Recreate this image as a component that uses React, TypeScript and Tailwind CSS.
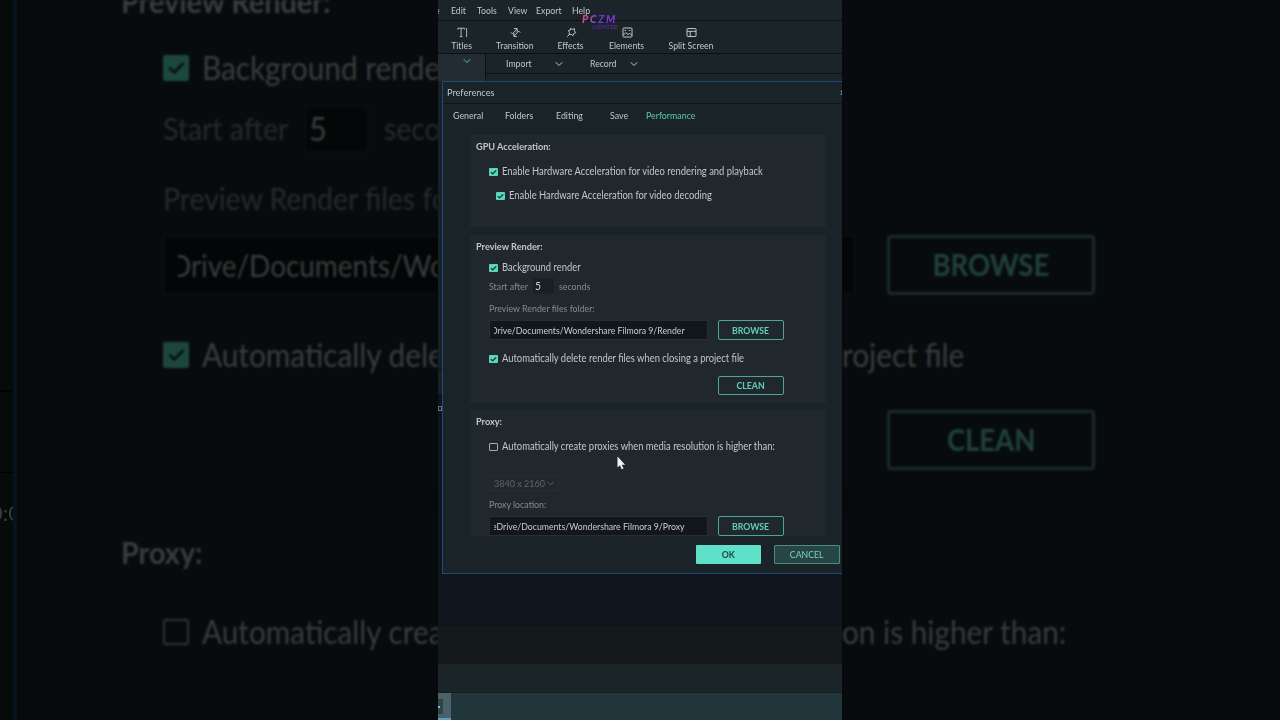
import { Check, ChevronDown } from "lucide-react";
import type { ReactNode } from "react";

const menuItems = [
  { label: "Edit", className: "ml-[13px] w-[26px]" },
  { label: "Tools", className: "w-[31px]" },
  { label: "View", className: "w-[28px]" },
  { label: "Export", className: "w-[36px]" },
  { label: "Help", className: "w-[24px]" },
];

const tabs = [
  { label: "General", className: "ml-[10px] w-[52px]" },
  { label: "Folders", className: "w-[51px]" },
  { label: "Editing", className: "w-[54px]" },
  { label: "Save", className: "w-[36px]" },
  { label: "Performance", className: "text-[#58cbb1]" },
];

type TextProps = { children: ReactNode; className?: string };

// Lato set slightly condensed, as the app's own UI font is.
function Narrow({ children, className = "" }: TextProps) {
  return (
    <span className={`inline-block origin-left scale-x-90 whitespace-nowrap ${className}`}>{children}</span>
  );
}

function NarrowCenter({ children }: TextProps) {
  return <span className="inline-block scale-x-90 whitespace-nowrap">{children}</span>;
}

function Wide({ children, className = "" }: TextProps) {
  return (
    <span className={`inline-block origin-left scale-x-93 whitespace-nowrap ${className}`}>{children}</span>
  );
}

function TitlesIcon() {
  return (
    <svg className="size-[11px]" viewBox="0 0 11 11" fill="none" stroke="currentColor" strokeWidth="0.9">
      <path d="M.8 2.6V1.2h6.6v1.4M4.1 1.2v8.4M2.8 9.6h2.6M9.6 1v9" />
    </svg>
  );
}

function TransitionIcon() {
  return (
    <svg className="size-[11px]" viewBox="0 0 11 11" fill="none" stroke="currentColor" strokeWidth="1">
      <path d="M.8 5.4 2.4 7l4.4-4.8M4 1.6h3.2v3.2M10.2 5.6 8.6 4 4.2 8.8M7 9.4H3.8V6.2" />
    </svg>
  );
}

function EffectsIcon() {
  return (
    <svg className="size-[11px]" viewBox="0 0 11 11" fill="none" stroke="currentColor" strokeWidth="1" strokeLinejoin="round">
      <path d="m4.6 1.4 1.6 1 2.2-.8v2.3l1.4 1.7-2 .9-.8 2.1-1.8-1.3-2.2.3.4-2.2-1-1.9 2-.5zM3.2 7.6 1.2 9.8" />
    </svg>
  );
}

function ElementsIcon() {
  return (
    <svg className="size-[11px]" viewBox="0 0 11 11" fill="none" stroke="currentColor" strokeWidth="1">
      <rect x="1" y="1" width="9" height="9" rx=".6" />
      <path d="m1.4 8 2.4-2.4 2.2 2 1.4-1.2L9.8 8M2.6 3.4h1.6M6.8 3.4h1.4" />
    </svg>
  );
}

function SplitScreenIcon() {
  return (
    <svg className="size-[11px]" viewBox="0 0 11 11" fill="none" stroke="currentColor" strokeWidth="1">
      <rect x="1" y="1.5" width="9" height="8" rx=".6" />
      <path d="M1 4.3h9M4.2 4.3v5.2" />
    </svg>
  );
}

const tools = [
  { label: "Titles", icon: <TitlesIcon />, className: "ml-[4px] w-[40px]" },
  { label: "Transition", icon: <TransitionIcon />, className: "ml-[8px] w-[50px]" },
  { label: "Effects", icon: <EffectsIcon />, className: "ml-[11px] w-[40px]" },
  { label: "Elements", icon: <ElementsIcon />, className: "ml-[12px] w-[48px]" },
  { label: "Split Screen", icon: <SplitScreenIcon />, className: "ml-[11px] w-[58px]" },
];

function CheckRow({ checked = true, className, children }: { checked?: boolean; className: string; children: ReactNode }) {
  return (
    <div className={`flex h-4 items-center gap-[4px] text-[10.45px] ${className}`}>
      {checked ? (
        <span className="flex size-[8.5px] items-center justify-center rounded-[1px] bg-[#5ad6bd]">
          <Check className="size-[7px] text-[#15302f]" strokeWidth={4} />
        </span>
      ) : (
        <span className="size-[8.5px] rounded-[1px] border border-[#a4abae]" />
      )}
      <Narrow>{children}</Narrow>
    </div>
  );
}

function OutlineButton({ children }: { children: ReactNode }) {
  return (
    <button className="flex h-full w-[65.5px] items-center justify-center rounded-[2px] border border-[#4fa596] text-[9.7px] font-bold text-[#5ed0bb]">
      <NarrowCenter>{children}</NarrowCenter>
    </button>
  );
}

function PathField({ children }: { children: ReactNode }) {
  return (
    <div className="flex h-5 w-[219px] items-center overflow-hidden border border-[#272e33] bg-[#11171b] pl-[4px]">
      <div className="flex overflow-hidden text-[9.7px] text-[#c8ced1]">{children}</div>
    </div>
  );
}

function Toolbar() {
  return (
    <header className="text-[9.7px] text-[#c0c7ca]">
      <nav className="flex h-[21px] items-center border-b border-[#0b1013]">
        <div className="-ml-[3px] -mr-[3px] w-[6px]">
          <Narrow>e</Narrow>
        </div>
        {menuItems.map((item) => (
          <div className={item.className} key={item.label}>
            <Narrow>{item.label}</Narrow>
          </div>
        ))}
      </nav>
      <div className="flex h-[33px] border-b border-[#0b1013]">
        {tools.map((tool) => (
          <div className={`flex flex-col items-center pt-[6px] leading-[14px] ${tool.className}`} key={tool.label}>
            {tool.icon}
            <NarrowCenter>{tool.label}</NarrowCenter>
          </div>
        ))}
      </div>
      <div className="flex h-[27px]">
        <div className="flex w-[48px] justify-center border-r border-[#0b1013] bg-[#222c32] pl-[11px] pt-[1px]">
          <ChevronDown className="size-[12px] text-[#54c4aa]" />
        </div>
        <div className="flex-1">
          <div className="flex h-5 items-center border-b border-[#0b1013]">
            <div className="ml-[20px] w-[47px]">
              <Narrow>Import</Narrow>
            </div>
            <ChevronDown className="size-[12px]" />
            <div className="ml-[25px] w-[38px]">
              <Narrow>Record</Narrow>
            </div>
            <ChevronDown className="size-[12px]" />
          </div>
        </div>
      </div>
    </header>
  );
}

function Preferences() {
  return (
    <section className="h-[493px] w-[420px] shrink-0 border border-[#1e4b78] bg-[#1a2428] text-[10.2px] text-[#c0c7ca]">
      <div className="flex h-[22px] items-center border-b border-[#0f1518] pl-[4px]">
        <div className="w-[393px]">
          <Narrow>Preferences</Narrow>
        </div>
        <span className="font-bold">×</span>
      </div>
      <div className="flex h-[31px] items-center pb-[8px] text-[9.8px]">
        {tabs.map((tab) => (
          <div className={tab.className} key={tab.label}>
            <Narrow>{tab.label}</Narrow>
          </div>
        ))}
      </div>

      <div className="ml-[27px] flex h-[401px] w-[356px] flex-col overflow-hidden">
        <div className="h-[92px] shrink-0 bg-[#20282d] px-[6px] pt-[3px]">
          <h2 className="h-4 font-bold leading-4">
            <Narrow>GPU Acceleration:</Narrow>
          </h2>
          <CheckRow className="ml-[13px] mt-[10px]">
            Enable Hardware Acceleration for video rendering and playback
          </CheckRow>
          <CheckRow className="ml-[20px] mt-[8px]">Enable Hardware Acceleration for video decoding</CheckRow>
        </div>

        <div className="mt-2 h-[168px] shrink-0 bg-[#20282d] px-[6px] pt-[3px]">
          <h2 className="h-4 font-bold leading-4">
            <Narrow>Preview Render:</Narrow>
          </h2>
          <CheckRow className="ml-[13px] mt-[6px]">Background render</CheckRow>
          <div className="ml-[13px] mt-[2px] flex h-4 items-center text-[9.8px] text-[#848c90]">
            <div className="w-[44px] shrink-0">
              <Narrow>Start after</Narrow>
            </div>
            <div className="flex h-4 w-[21px] items-center border border-[#1b2226] bg-[#192025] pl-[1px] text-[11.5px] text-[#c8ced1]">
              <Narrow>5</Narrow>
            </div>
            <Narrow className="ml-[5px]">seconds</Narrow>
          </div>
          <div className="ml-[13px] mt-[6px] h-4 text-[9.8px] leading-4 text-[#848c90]">
            <Narrow>Preview Render files folder:</Narrow>
          </div>
          <div className="ml-[13px] mt-[4px] flex h-5 gap-[10px]">
            <PathField>
              <Narrow className="-ml-[3px]">Drive/Documents/Wondershare Filmora 9/Render</Narrow>
            </PathField>
            <OutlineButton>BROWSE</OutlineButton>
          </div>
          <CheckRow className="ml-[13px] mt-[11px]">Automatically delete render files when closing a project file</CheckRow>
          <div className="ml-[242px] mt-[9px] h-[19px]">
            <OutlineButton>CLEAN</OutlineButton>
          </div>
        </div>

        <div className="mt-[7px] h-[127px] shrink-0 bg-[#20282d] px-[6px] pt-[3px]">
          <h2 className="h-4 font-bold leading-4">
            <Narrow>Proxy:</Narrow>
          </h2>
          <CheckRow checked={false} className="ml-[13px] mt-[10px]">
            Automatically create proxies when media resolution is higher than:
          </CheckRow>
          <div className="ml-[13px] mt-[20px] flex h-4 w-[70px] items-center border border-[#252d31] pl-[4px] text-[10px] text-[#5d656a]">
            <div className="w-[51px]">
              <Narrow>3840 x 2160</Narrow>
            </div>
            <ChevronDown className="size-[11px] shrink-0" />
          </div>
          <div className="ml-[13px] mt-[5px] h-4 text-[9.8px] leading-4 text-[#848c90]">
            <Narrow>Proxy location:</Narrow>
          </div>
          <div className="ml-[13px] mt-[4px] flex h-5 gap-[10px]">
            <PathField>
              <Narrow className="-ml-[2px]">eDrive/Documents/Wondershare Filmora 9/Proxy</Narrow>
            </PathField>
            <OutlineButton>BROWSE</OutlineButton>
          </div>
        </div>
      </div>

      <div className="ml-[253px] mt-[9px] flex gap-[13px] text-[9.7px]">
        <button className="h-[19px] w-[65px] rounded-[1px] bg-[#5fe0c9] font-bold text-[#1d4744]">
          <NarrowCenter>OK</NarrowCenter>
        </button>
        <button className="h-[19px] w-[66px] rounded-[1px] border border-[#4c8c82] bg-[#264544] text-[#78d3c2]">
          <NarrowCenter>CANCEL</NarrowCenter>
        </button>
      </div>
    </section>
  );
}

function Editor() {
  return (
    <main className="relative flex h-[720px] w-[404px] flex-col overflow-hidden bg-[#1b2428]">
      <Toolbar />
      <div className="flex h-[545px] bg-[#10151d]">
        <div className="flex h-full w-[4px] shrink-0 flex-col">
          <div className="h-[289px] border-b border-[#0a0e10] bg-[#172125]" />
          <div className="h-[25px] border-b border-[#0a0e10] bg-[#172125]" />
          <div className="mt-[11px] h-[5px] w-[4px] border border-[#667077]" />
        </div>
        <Preferences />
      </div>
      <div className="h-[38px] bg-[#141a1b]" />
      <div className="h-[29px] border-b border-[#151d20] bg-[#1b2528]" />
      <div className="flex h-[27px] bg-[#20363b]">
        <div className="h-full w-[13px] border-b-2 border-[#5f9dbc] bg-[#4c6067] pt-[6px]">
          <div className="flex h-[15px] w-[5px] items-center bg-[#314347]">
            <span className="h-[2px] w-[2px] bg-[#54d8bd]" />
          </div>
        </div>
      </div>

      <div className="absolute left-[143px] top-[15px] flex w-[37px] flex-col items-end font-black italic">
        <div className="bg-linear-to-r from-[#e0488a] via-[#6b36d8] to-[#9030e8] bg-clip-text pr-px text-[10.5px] leading-[9px] tracking-[1.8px] text-transparent">
          PCZM
        </div>
        <div className="text-[5.5px] leading-[6px] tracking-[0.5px] text-[#5a2496]">LIGHTED</div>
      </div>
      <svg className="absolute left-[179px] top-[456px] h-[15px] w-[9px]" viewBox="0 0 9 15">
        <path d="M.5.5v11l2.4-2.2 1.8 4 1.8-.8-1.8-3.8h3.4z" fill="#f1f3f4" />
      </svg>
    </main>
  );
}

function LargeCheck({ checked = true }: { checked?: boolean }) {
  return checked ? (
    <span className="flex size-[26px] shrink-0 items-center justify-center rounded-[2px] bg-[#1d473c]">
      <Check className="size-[19px] text-[#07100f]" strokeWidth={3.5} />
    </span>
  ) : (
    <span className="size-[26px] shrink-0 rounded-[3px] border-2 border-[#303334]" />
  );
}

function LeftBackdrop() {
  return (
    <aside className="flex h-[720px] w-[438px] overflow-hidden bg-[#060a0b]">
      <div className="w-[13px] shrink-0 overflow-hidden">
        <div className="h-[392px] border-b-2 border-black" />
        <div className="h-[81px] border-b border-black" />
        <div className="-ml-[10px] mt-[25px] whitespace-nowrap text-[22px] leading-[30px] text-[#35393b] blur-[0.6px]">0:0</div>
      </div>
      <div className="w-[4px] shrink-0 bg-[#06131d]" />
      <div className="ml-[84px] w-[337px] shrink-0 text-[32px] text-[#393c3d] blur-[0.8px]">
        <div className="h-[490px] overflow-hidden bg-[#070b0d] pl-[20px]">
          <div className="-mt-[19px] h-10 text-[31px] font-bold leading-10">
            <Wide>Preview Render:</Wide>
          </div>
          <div className="ml-[42px] mt-[27px] flex h-10 items-center gap-[13px]">
            <LargeCheck />
            <Wide>Background render</Wide>
          </div>
          <div className="ml-[42px] mt-[16px] flex h-[50px] items-center text-[30.5px] text-[#25292a]">
            <div className="w-[141px] shrink-0">
              <Wide>Start after</Wide>
            </div>
            <div className="flex h-[48px] w-[65px] shrink-0 items-center border-2 border-[#0b0e0f] bg-[#040607] pl-[3px] text-[33px] text-[#3b3e3f]">
              <Wide>5</Wide>
            </div>
            <Wide className="ml-[15px]">seconds</Wide>
          </div>
          <div className="ml-[42px] mt-[24px] h-10 text-[30.5px] leading-10 text-[#25292a]">
            <Wide>Preview Render files folder:</Wide>
          </div>
          <div className="ml-[42px] mt-[17px] flex h-[60px] w-[330px] items-center border-2 border-[#0b0f10] bg-[#030506] pl-[13px] text-[30px]">
            <div className="overflow-hidden">
              <Wide className="-ml-[8px]">Drive/Documents/Wondershare</Wide>
            </div>
          </div>
          <div className="ml-[42px] mt-[40px] flex h-10 items-center gap-[13px]">
            <LargeCheck />
            <Wide>Automatically delete</Wide>
          </div>
        </div>
        <div className="mt-[22px] h-[208px] bg-[#070b0d] pl-[20px] pt-[20px]">
          <div className="h-10 text-[31px] font-bold leading-10">
            <Wide>Proxy:</Wide>
          </div>
          <div className="ml-[42px] mt-[40px] flex h-10 items-center gap-[13px]">
            <LargeCheck checked={false} />
            <Wide>Automatically create</Wide>
          </div>
        </div>
      </div>
    </aside>
  );
}

function RightBackdrop() {
  return (
    <aside className="h-[720px] w-[438px] overflow-hidden bg-[#060a0b]">
      <div className="w-[387px] text-[32px] text-[#393c3d] blur-[0.8px]">
        <div className="h-[490px] bg-[#070b0d] pt-[235px]">
          <div className="flex h-[60px]">
            <div className="h-[60px] w-[14px] border-2 border-l-0 border-[#0b0f10] bg-[#030506]" />
            <div className="ml-[31px] flex w-[208px] items-center justify-center rounded-[4px] border-3 border-[#1a2a29] text-[30.5px] font-bold text-[#20403b]">
              <NarrowCenter>BROWSE</NarrowCenter>
            </div>
          </div>
          <div className="mt-[40px] h-10 leading-10">
            <Wide>roject file</Wide>
          </div>
          <div className="ml-[45px] mt-[35px] flex h-[60px] w-[208px] items-center justify-center rounded-[4px] border-3 border-[#1a2a29] pb-px text-[30.5px] font-bold text-[#20403b]">
            <NarrowCenter>CLEAN</NarrowCenter>
          </div>
        </div>
        <div className="mt-[22px] h-[208px] bg-[#070b0d] pt-[100px]">
          <div className="h-10 leading-10">
            <Wide>on is higher than:</Wide>
          </div>
        </div>
      </div>
    </aside>
  );
}

export default function App() {
  return (
    <div className="flex h-[720px] w-[1280px] overflow-hidden bg-[#060a0b] font-['Lato','Liberation_Sans',sans-serif]">
      <LeftBackdrop />
      <Editor />
      <RightBackdrop />
    </div>
  );
}
